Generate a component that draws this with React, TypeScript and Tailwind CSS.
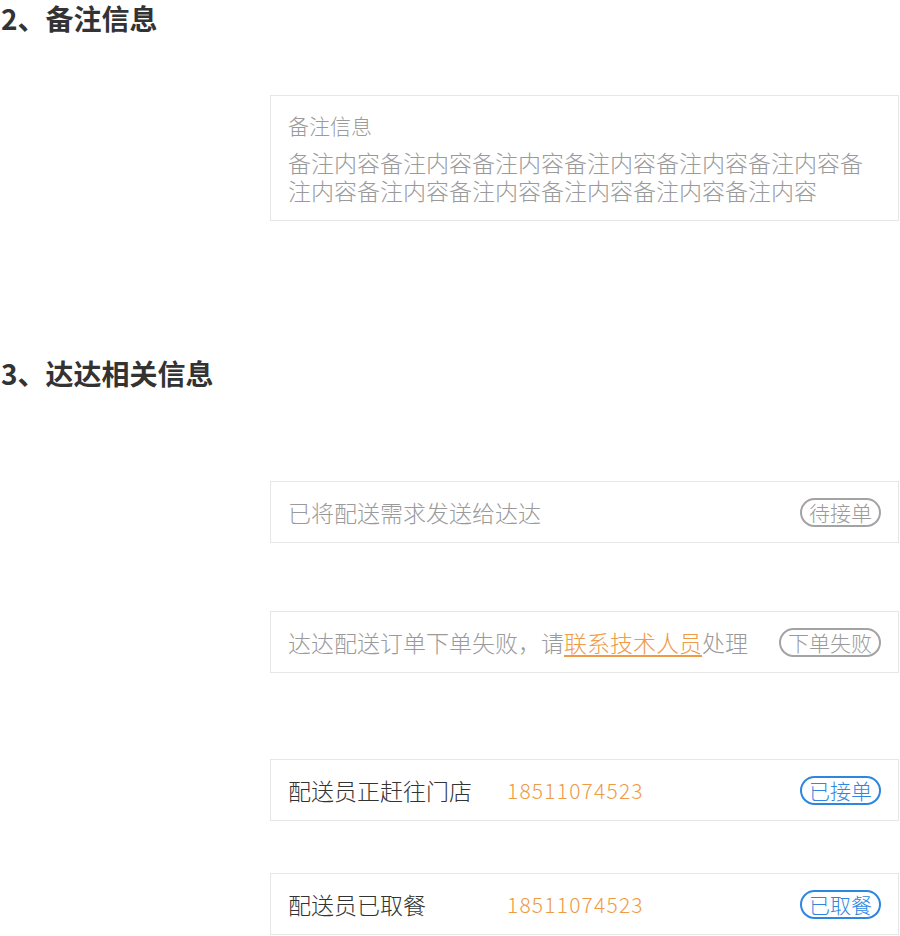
const font = { fontFamily: '"Noto Sans CJK SC", "Noto Sans", sans-serif' };

function Badge({ text, tone }: { text: string; tone: 'gray' | 'blue' }) {
  const cls =
    tone === 'blue'
      ? 'border-[#2e86de] text-[#2e86de]'
      : 'border-[#a3a3a3] text-[#9a9a9a]';
  return (
    <span className={`shrink-0 rounded-full border-2 px-[7px] text-[21px] leading-[25px] ${cls}`}>
      {text}
    </span>
  );
}

function Row({ children, badge }: { children: React.ReactNode; badge: React.ReactNode }) {
  return (
    <div className="ml-[270px] flex h-[62px] w-[629px] items-center justify-between border border-[#e6e6e6] pl-[17px] pr-[17px]">
      <div className="flex items-center text-[23px] leading-[28px]">{children}</div>
      {badge}
    </div>
  );
}

export default function App() {
  return (
    <div className="w-[900px] bg-white font-light text-[#333]" style={font}>
      <h2 className="pl-px text-[28px] font-bold leading-[36px] text-[#333]">2、备注信息</h2>

      <div className="ml-[270px] mt-[59px] w-[629px] border border-[#e6e6e6] px-[17px] pb-[16px] pt-[14px]">
        <div className="text-[21px] leading-[30px] text-[#9a9a9a]">备注信息</div>
        <p className="mt-[8px] text-[23px] leading-[28px] text-[#9a9a9a]">
          备注内容备注内容备注内容备注内容备注内容备注内容备注内容备注内容备注内容备注内容备注内容备注内容
        </p>
      </div>

      <h2 className="mt-[134px] pl-px text-[28px] font-bold leading-[36px] text-[#333]">3、达达相关信息</h2>

      <div className="mt-[90px]">
        <Row badge={<Badge text="待接单" tone="gray" />}>
          <span className="text-[#9a9a9a]">已将配送需求发送给达达</span>
        </Row>
      </div>

      <div className="mt-[68px]">
        <Row badge={<Badge text="下单失败" tone="gray" />}>
          <span className="text-[#9a9a9a]">
            达达配送订单下单失败，请
            <a className="text-[#ef9a45] underline underline-offset-[3px]">联系技术人员</a>
            处理
          </span>
        </Row>
      </div>

      <div className="mt-[86px]">
        <Row badge={<Badge text="已接单" tone="blue" />}>
          <span className="w-[219px] text-[#333]">配送员正赶往门店</span>
          <span className="text-[21px] tracking-[1.2px] text-[#ef9a45]">18511074523</span>
        </Row>
      </div>

      <div className="mt-[52px]">
        <Row badge={<Badge text="已取餐" tone="blue" />}>
          <span className="w-[219px] text-[#333]">配送员已取餐</span>
          <span className="text-[21px] tracking-[1.2px] text-[#ef9a45]">18511074523</span>
        </Row>
      </div>
    </div>
  );
}
